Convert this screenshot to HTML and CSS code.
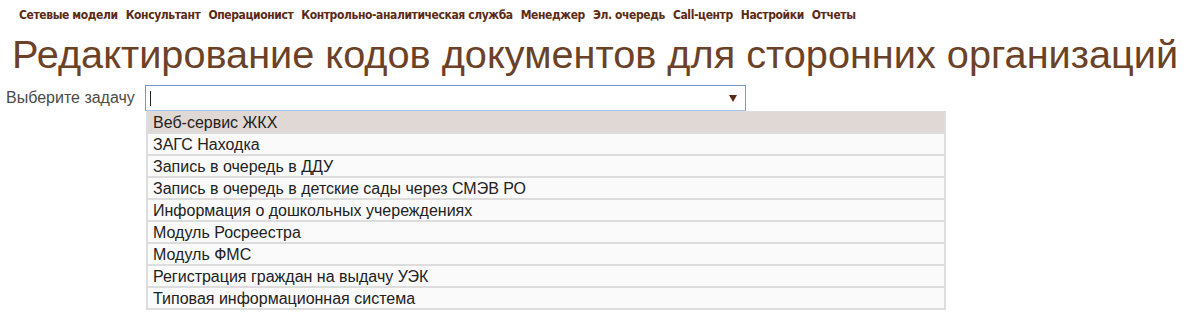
FILE: index.html
```html
<!DOCTYPE html>
<html lang="ru">
<head>
<meta charset="utf-8">
<link rel="stylesheet" href="styles.css">
</head>
<body>
<nav class="menu">
  <a>Сетевые модели</a>
  <a>Консультант</a>
  <a>Операционист</a>
  <a>Контрольно-аналитическая служба</a>
  <a>Менеджер</a>
  <a>Эл. очередь</a>
  <a>Call-центр</a>
  <a>Настройки</a>
  <a>Отчеты</a>
</nav>
<h1 class="title">Редактирование кодов документов для сторонних организаций</h1>
<div class="field">
  <label class="label">Выберите задачу</label>
  <div class="combo">
    <div class="input"><span class="caret"></span><span class="arrow"></span></div>
    <ul class="list">
      <li class="item active">Веб-сервис ЖКХ</li>
      <li class="item">ЗАГС Находка</li>
      <li class="item">Запись в очередь в ДДУ</li>
      <li class="item">Запись в очередь в детские сады через СМЭВ РО</li>
      <li class="item">Информация о дошкольных учереждениях</li>
      <li class="item">Модуль Росреестра</li>
      <li class="item">Модуль ФМС</li>
      <li class="item">Регистрация граждан на выдачу УЭК</li>
      <li class="item">Типовая информационная система</li>
    </ul>
  </div>
</div>
</body>
</html>
```

FILE: styles.css
```css
html, body {
  margin: 0;
  padding: 0;
  background: #fff;
}
body {
  font-family: "Liberation Sans", Arial, sans-serif;
}
.menu {
  display: flex;
  gap: 8px;
  padding: 7px 0 0 19px;
  height: 22px;
  box-sizing: border-box;
  font-family: "DejaVu Sans Condensed", "DejaVu Sans", sans-serif;
  font-weight: bold;
  font-size: 12px;
  letter-spacing: -0.4px;
  line-height: 16px;
  color: #5b2b16;
}
.menu a {
  white-space: nowrap;
}
.title {
  margin: 10px 0 0 12px;
  font-weight: normal;
  font-size: 39.7px;
  line-height: 44px;
  color: #6b4227;
  white-space: nowrap;
}
.field {
  display: flex;
  align-items: flex-start;
  margin-top: 9px;
  padding-left: 6px;
}
.label {
  font-size: 16px;
  line-height: 18px;
  color: #4a4a4a;
  margin-top: 4px;
  width: 139px;
}
.combo {
  display: flex;
  flex-direction: column;
}
.input {
  position: relative;
  width: 599px;
  height: 24px;
  border: 1px solid #7b96c6;
  border-bottom-color: #a9c0e8;
  background: #fff;
}
.caret {
  position: absolute;
  left: 4px;
  top: 5px;
  width: 1px;
  height: 15px;
  background: #222;
}
.arrow {
  position: absolute;
  right: 8px;
  top: 9px;
  width: 0;
  height: 0;
  border-left: 4px solid transparent;
  border-right: 4px solid transparent;
  border-top: 7px solid #5b2b16;
}
.list {
  list-style: none;
  margin: 0 0 0 1px;
  padding: 0;
  width: 800px;
  box-sizing: border-box;
  background: #ddd;
  border: 2px solid #ddd;
  border-top-width: 1px;
  display: flex;
  flex-direction: column;
  gap: 2px;
}
.item {
  height: 20px;
  line-height: 22px;
  overflow: hidden;
  padding-left: 5px;
  font-size: 16px;
  color: #222;
  background: #fafafa;
}
.item.active {
  background: #e0d8d5;
}
```
